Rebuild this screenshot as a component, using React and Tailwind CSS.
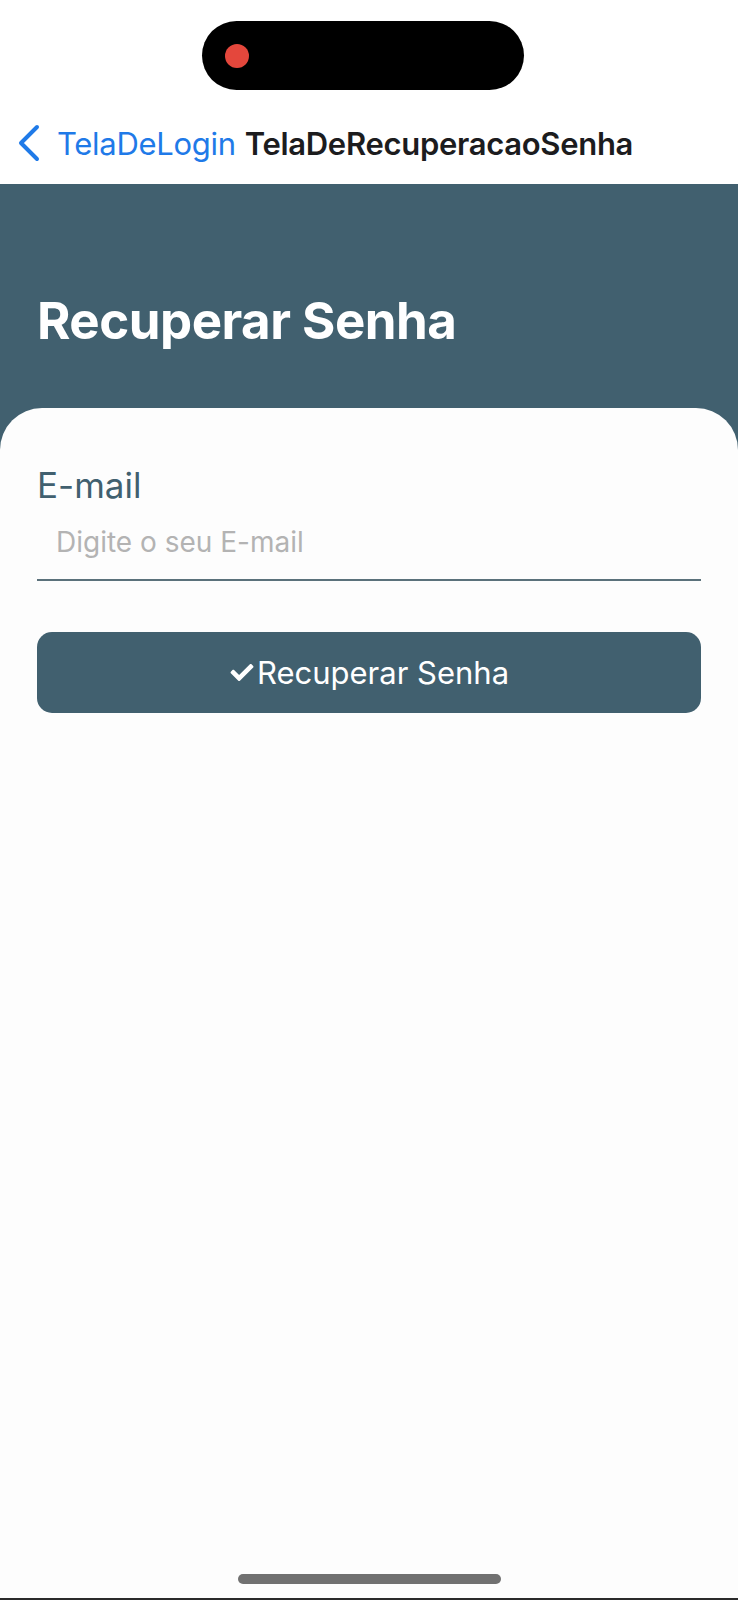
import { FaCheck } from "react-icons/fa";

export default function App() {
	return (
		<div className="relative w-[738px] h-[1600px] bg-[#fdfdfd] flex flex-col font-['Inter',sans-serif] overflow-hidden">
			{/* status area */}
			<div className="h-[90px] pt-[21px] bg-white">
				<div className="ml-[202px] w-[322px] h-[69px] rounded-full bg-black flex items-center pl-[23px]">
					<div className="w-[24px] h-[24px] rounded-full bg-[#e4473c]" />
				</div>
			</div>

			{/* nav bar */}
			<div className="h-[94px] pt-[12px] flex items-center bg-white">
				<svg
					className="ml-[17px] w-[24px] h-[38px] text-[#1f7ae8]"
					viewBox="0 0 24 38"
					fill="none"
					stroke="currentColor"
					strokeWidth={4}
					strokeLinecap="round"
					strokeLinejoin="round"
				>
					<path d="M20 3L4 19l16 16" />
				</svg>
				<span className="ml-[16px] text-[31px] leading-none text-[#1f7ae8] tracking-[-0.3px]">
					TelaDeLogin
				</span>
				<span className="ml-[9px] text-[31px] leading-none font-semibold text-[#1c1c1e] tracking-[-0.3px]">
					TelaDeRecuperacaoSenha
				</span>
			</div>

			{/* header band */}
			<div className="bg-[#41606f]">
				<div className="h-[224px] pt-[111px] pl-[37px]">
					<h1 className="text-[51px] leading-none font-bold text-white tracking-[-0.5px]">
						Recuperar Senha
					</h1>
				</div>

				{/* card */}
				<div className="bg-[#fdfdfd] rounded-t-[42px] px-[37px] pt-[60px] h-[600px]">
					<label className="block text-[35px] leading-none text-[#41606f]">
						E-mail
					</label>
					<input
						type="email"
						placeholder="Digite o seu E-mail"
						className="mt-[2px] w-full h-[76px] pl-[19px] text-[28px] bg-transparent border-b-2 border-[#5b717b] outline-none placeholder:text-[#b3b3b3]"
					/>
					<button className="mt-[51px] w-full h-[81px] rounded-[15px] bg-[#41606f] flex items-center justify-center text-white text-[31px] leading-none">
						<FaCheck className="w-[26px] h-[23px] mr-[2px]" />
						Recuperar Senha
					</button>
				</div>
			</div>

			<div className="flex-1" />

			{/* home indicator */}
			<div className="absolute left-[238px] top-[1574px] w-[263px] h-[10px] rounded-full bg-[#717171]" />
			<div className="absolute left-0 bottom-0 w-full h-[2px] bg-[#2a2a2a]" />
		</div>
	);
}
